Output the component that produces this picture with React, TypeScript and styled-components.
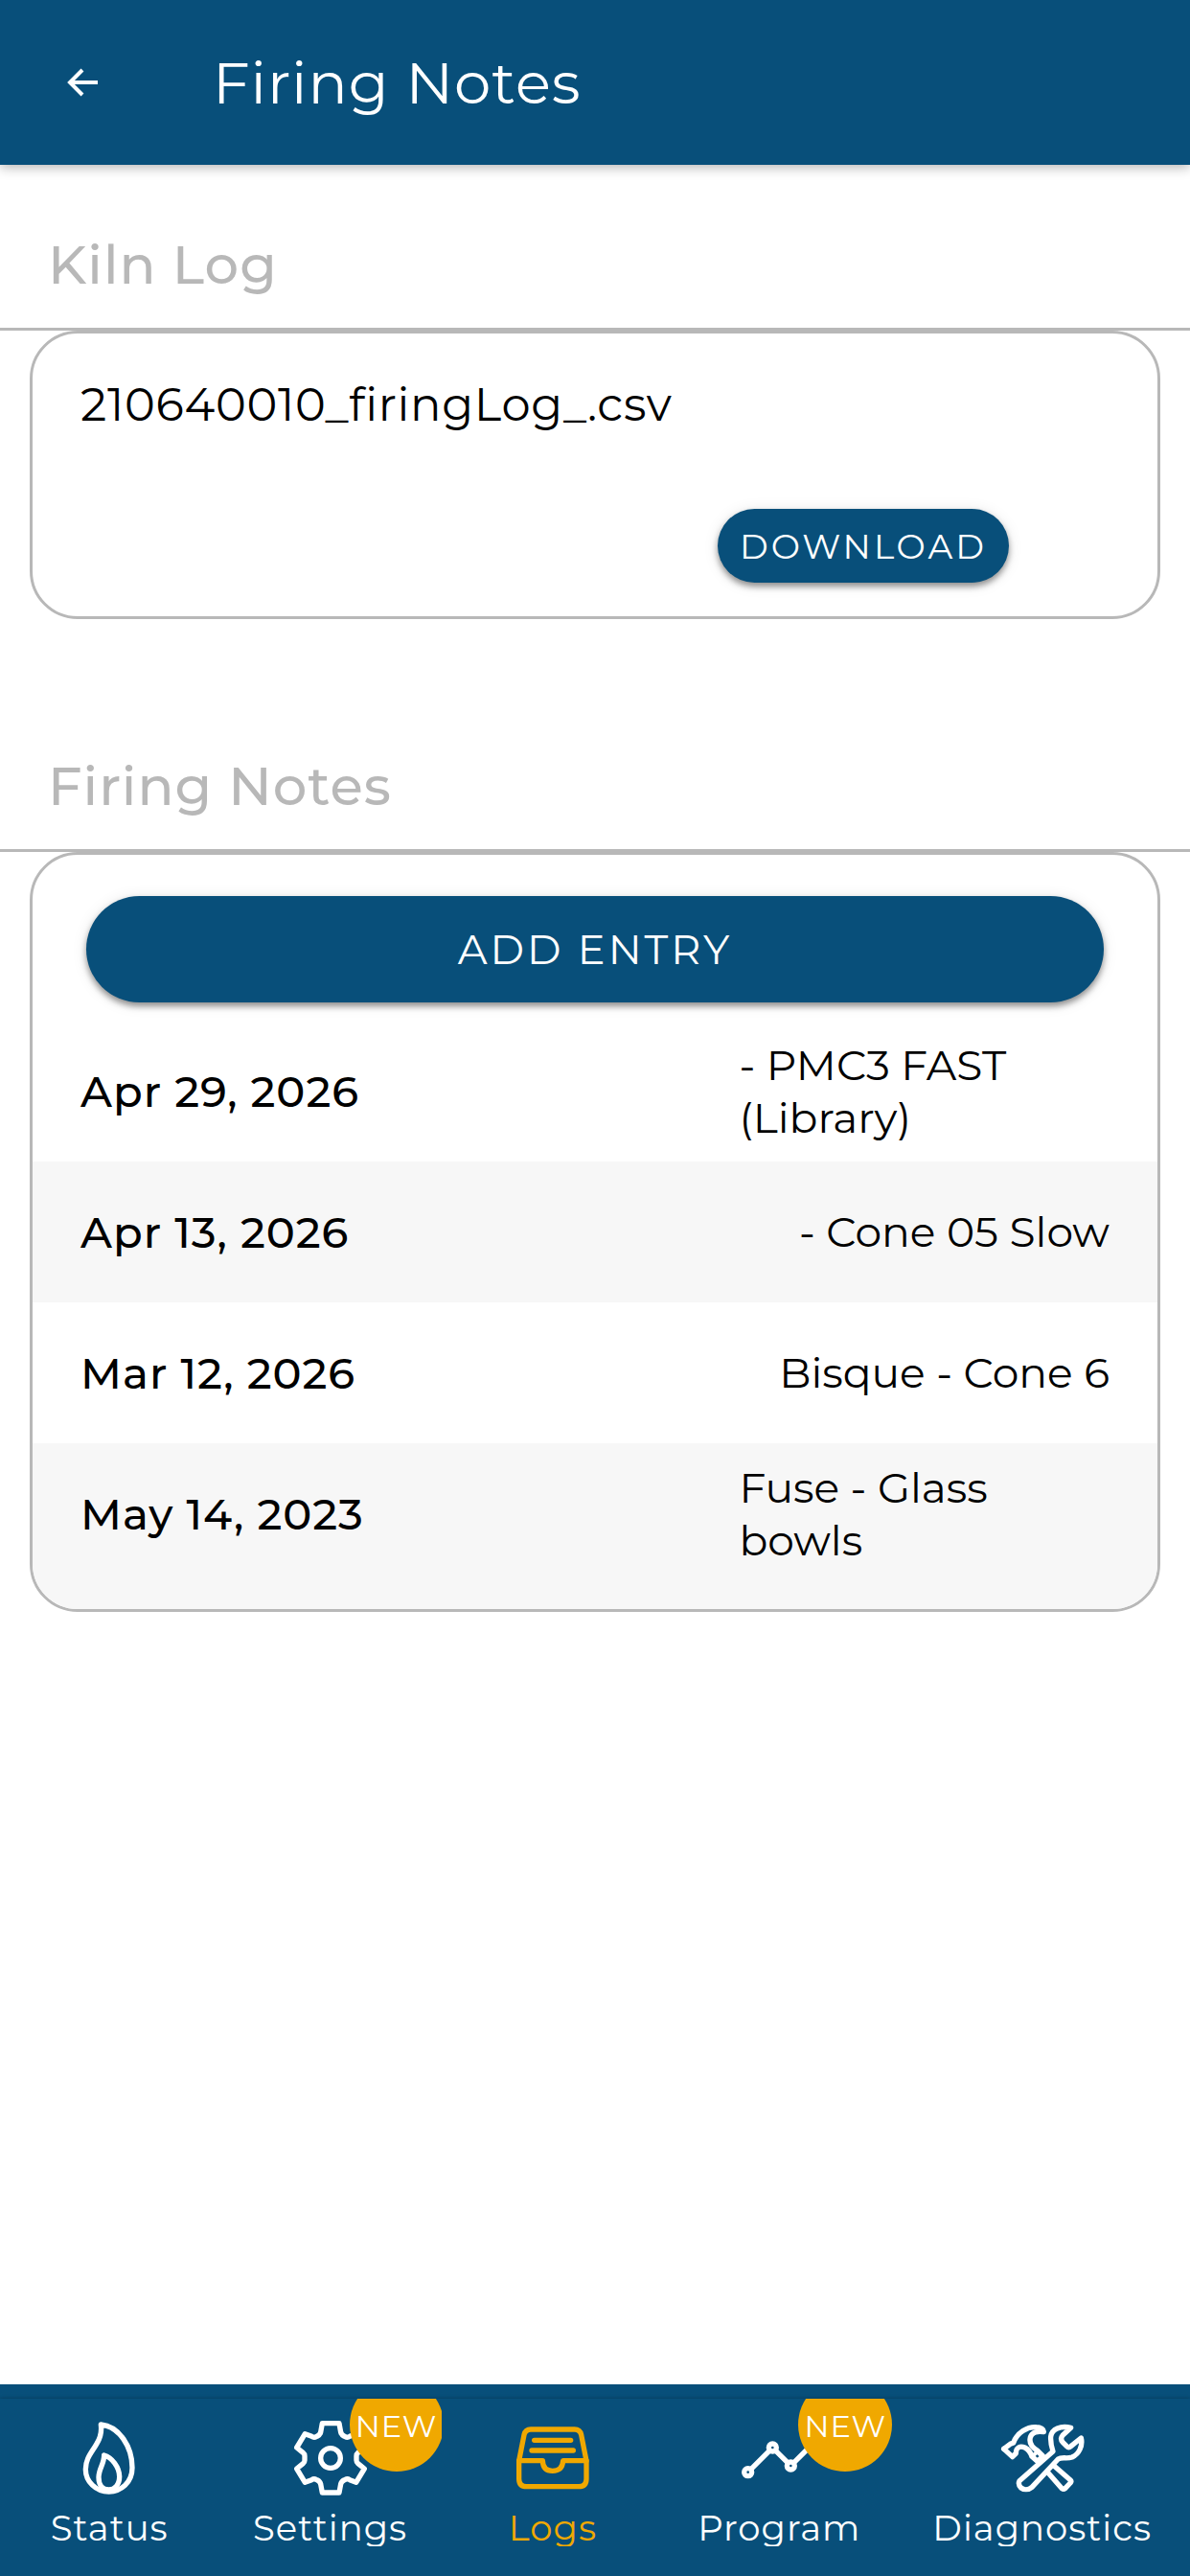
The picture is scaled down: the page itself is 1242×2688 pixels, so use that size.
import type { ReactNode } from "react";
import styled, { createGlobalStyle } from "styled-components";

const BLUE = "#084f7a";
const ORANGE = "#f0a800";
const GREY = "#b8b8b8";

const GlobalStyle = createGlobalStyle`
  *, *::before, *::after {
    box-sizing: border-box;
  }

  body {
    margin: 0;
    background: #fff;
    color: #000;
    font-family: Montserrat, Inter, "Open Sans", sans-serif;
  }
`;

const Page = styled.div`
  display: flex;
  flex-direction: column;
  min-height: 100vh;
`;

const AppBar = styled.header`
  display: flex;
  align-items: center;
  gap: 86px;
  height: 172px;
  padding: 0 36px;
  background: ${BLUE};
  color: #fff;
  box-shadow: 0 2px 12px rgba(0, 0, 0, 0.32);
`;

const BackButton = styled.button`
  display: flex;
  align-items: center;
  justify-content: center;
  width: 100px;
  height: 100px;
  padding: 0;
  border: 0;
  border-radius: 50%;
  background: none;
  color: inherit;
`;

const Title = styled.h1`
  margin: 0;
  font-size: 61px;
  font-weight: 400;
  line-height: 72px;
  letter-spacing: 1px;
`;

const Main = styled.main`
  display: flex;
  flex: 1;
  flex-direction: column;
  gap: 70px;
`;

const SectionTitle = styled.h2`
  margin: 0;
  padding: 70px 50px 32px;
  border-bottom: 3px solid ${GREY};
  color: ${GREY};
  font-size: 56px;
  font-weight: 500;
  line-height: 68px;
  letter-spacing: 1px;
`;

const Card = styled.div`
  margin: 0 31px;
  border: 3px solid ${GREY};
  border-radius: 50px;
  overflow: hidden;
`;

const FileName = styled.p`
  margin: 0;
  padding: 42px 50px 77px;
  font-size: 48px;
  line-height: 64px;
  letter-spacing: 0.015em;
`;

const CardActions = styled.div`
  display: flex;
  justify-content: flex-end;
  padding: 0 155px 35px 50px;
`;

const PillButton = styled.button<{ $large?: boolean }>`
  height: ${({ $large }) => ($large ? 111 : 77)}px;
  padding: 0 23px;
  border: 0;
  border-radius: 56px;
  background: ${BLUE};
  color: #fff;
  font-family: inherit;
  font-size: ${({ $large }) => ($large ? 43 : 36)}px;
  font-weight: 400;
  letter-spacing: 3px;
  box-shadow: 0 4px 6px rgba(0, 0, 0, 0.4), 0 2px 16px rgba(0, 0, 0, 0.1);
`;

const AddEntry = styled.div`
  display: grid;
  padding: 43px 56px 19px;
`;

const Entries = styled.ul`
  margin: 0;
  padding: 0;
  list-style: none;
`;

const Entry = styled.li`
  display: flex;
  align-items: center;
  justify-content: space-between;
  min-height: 147px;
  padding: 0 50px;
  font-size: 44px;
  line-height: 55px;

  &:nth-child(even) {
    background: #f7f7f7;
  }

  &:last-child {
    box-sizing: content-box;
    padding-bottom: 26px;
  }
`;

const EntryDate = styled.time`
  font-size: 45px;
  font-weight: 500;
  letter-spacing: 1px;
`;

const EntryName = styled.span`
  max-width: 36%;
`;

const Footer = styled.footer`
  padding-top: 15px;
  background: ${BLUE};
`;

const BottomNav = styled.nav`
  display: grid;
  grid-template-columns: 57fr 58fr 58fr 60fr 77fr;
  padding-bottom: 31px;
  background: ${BLUE};
  box-shadow: 0 0 4px rgba(0, 0, 0, 0.3);
`;

const NavItem = styled.button<{ $active?: boolean }>`
  position: relative;
  display: flex;
  flex-direction: column;
  align-items: center;
  gap: 15px;
  height: 154px;
  padding: 21px 0 0;
  border: 0;
  background: none;
  color: ${({ $active }) => ($active ? ORANGE : "#fff")};
  font-family: inherit;
  font-size: 37px;
  font-weight: 400;
  line-height: 38px;
  letter-spacing: 1px;
  overflow: hidden;
`;

const Badge = styled.span`
  position: absolute;
  top: -22px;
  left: calc(50% + 20px);
  width: 98px;
  height: 98px;
  border-radius: 50%;
  background: ${ORANGE};
  color: #fff;
  font-size: 32px;
  line-height: 102px;
  text-align: center;
`;

const NavSvg = styled.svg`
  flex: none;
  width: 88px;
  height: 80px;
  overflow: visible;
  fill: none;
  stroke: currentColor;
  stroke-width: 16;
  stroke-linecap: round;
  stroke-linejoin: round;
`;

const BackIcon = () => (
  <svg
    width="36"
    height="32"
    viewBox="0 0 36 32"
    fill="none"
    stroke="currentColor"
    strokeWidth="4"
    aria-hidden="true"
  >
    <path d="M34 16H5M18 3L5 16l13 13" />
  </svg>
);

const FlameIcon = () => (
  <NavSvg viewBox="212 162 264 240" aria-hidden="true">
    <path d="M318 180C376 186 416 250 416 315C416 362 380 390 343 390C302 390 270 358 270 320C270 280 296 262 312 226C320 208 320 196 318 180Z" />
    <path d="M328 276C352 282 376 314 376 343C376 370 360 384 343 384C326 384 311 372 311 345C311 318 328 304 328 276Z" />
  </NavSvg>
);

const GearIcon = () => (
  <NavSvg viewBox="906 162 264 240" aria-hidden="true">
    <path d="M1012 176H1065L1070 204Q1072 212 1080 216L1084 218Q1091 222 1098 217L1118 209L1144 252L1124 268Q1119 272 1119 278V292Q1119 298 1124 302L1144 318L1118 361L1098 353Q1091 348 1084 352L1080 354Q1072 358 1070 366L1065 393H1012L1007 366Q1005 358 997 354L993 352Q986 348 979 353L958 361L932 318L952 302Q957 298 957 292V278Q957 272 952 268L932 252L958 209L979 217Q986 222 993 218L997 216Q1005 212 1007 204Z" />
    <circle cx="1038" cy="285" r="31" />
  </NavSvg>
);

const TrayIcon = () => (
  <NavSvg viewBox="222 162 264 240" aria-hidden="true">
    <path d="M248 293L264 212Q268 195 285 195H422Q439 195 443 212L459 293V350Q459 374 435 374H272Q248 374 248 350Z" />
    <path d="M296 229H410M288 261H418" />
    <path d="M248 293H322Q323 325 353 325Q384 325 386 293H459" />
  </NavSvg>
);

const ChartIcon = () => (
  <NavSvg viewBox="930 162 264 240" aria-hidden="true">
    <circle cx="965" cy="329" r="12" />
    <circle cx="1042" cy="252" r="12" />
    <circle cx="1099" cy="309" r="12" />
    <circle cx="1175" cy="233" r="12" />
    <path d="M975 319L1032 262M1052 262L1089 299M1109 299L1165 243" />
  </NavSvg>
);

const ToolsIcon = () => (
  <NavSvg viewBox="19 12 264 240" aria-hidden="true">
    {/* wrench */}
    <path d="M79 206L184 114C178 96 176 84 177 68C180 44 208 32 240 40L214 64Q205 75 215 86L227 98Q233 104 240 98L272 72C278 96 266 122 244 132C226 138 212 130 200 138L118 226C106 236 92 234 84 228C76 220 76 212 79 206Z" />
    {/* hammer handle */}
    <path d="M188 160L238 203Q243 208 238 213L222 230Q217 234 212 230L168 180" />
    {/* hammer head */}
    <path d="M30 106L57 131L68 120C68 100 82 96 96 102C108 108 114 118 118 130L134 144" />
    <path d="M30 106L50 91L60 87C72 54 104 36 132 38C146 38 156 46 155 53C136 50 118 54 113 70C108 90 122 104 136 112L152 128" />
    <path d="M120 129L135 115L149 129L135 143Z" strokeWidth="12" />
  </NavSvg>
);

const entries = [
  { date: "2026-04-29", label: "Apr 29, 2026", name: "- PMC3 FAST (Library)" },
  { date: "2026-04-13", label: "Apr 13, 2026", name: "- Cone 05 Slow" },
  { date: "2026-03-12", label: "Mar 12, 2026", name: "Bisque - Cone 6" },
  { date: "2023-05-14", label: "May 14, 2023", name: "Fuse - Glass bowls" },
];

interface Tab {
  label: string;
  icon: ReactNode;
  active?: boolean;
  isNew?: boolean;
}

const tabs: Tab[] = [
  { label: "Status", icon: <FlameIcon /> },
  { label: "Settings", icon: <GearIcon />, isNew: true },
  { label: "Logs", icon: <TrayIcon />, active: true },
  { label: "Program", icon: <ChartIcon />, isNew: true },
  { label: "Diagnostics", icon: <ToolsIcon /> },
];

export default function App() {
  return (
    <Page>
      <GlobalStyle />
      <AppBar>
        <BackButton type="button" aria-label="Back">
          <BackIcon />
        </BackButton>
        <Title>Firing Notes</Title>
      </AppBar>

      <Main>
        <section>
          <SectionTitle>Kiln Log</SectionTitle>
          <Card>
            <FileName>210640010_firingLog_.csv</FileName>
            <CardActions>
              <PillButton type="button">DOWNLOAD</PillButton>
            </CardActions>
          </Card>
        </section>

        <section>
          <SectionTitle>Firing Notes</SectionTitle>
          <Card>
            <AddEntry>
              <PillButton type="button" $large>
                ADD ENTRY
              </PillButton>
            </AddEntry>
            <Entries>
              {entries.map(({ date, label, name }) => (
                <Entry key={date}>
                  <EntryDate dateTime={date}>{label}</EntryDate>
                  <EntryName>{name}</EntryName>
                </Entry>
              ))}
            </Entries>
          </Card>
        </section>
      </Main>

      <Footer>
        <BottomNav>
          {tabs.map(({ label, icon, active, isNew }) => (
            <NavItem key={label} type="button" $active={active}>
              {icon}
              {label}
              {isNew && <Badge>NEW</Badge>}
            </NavItem>
          ))}
        </BottomNav>
      </Footer>
    </Page>
  );
}
